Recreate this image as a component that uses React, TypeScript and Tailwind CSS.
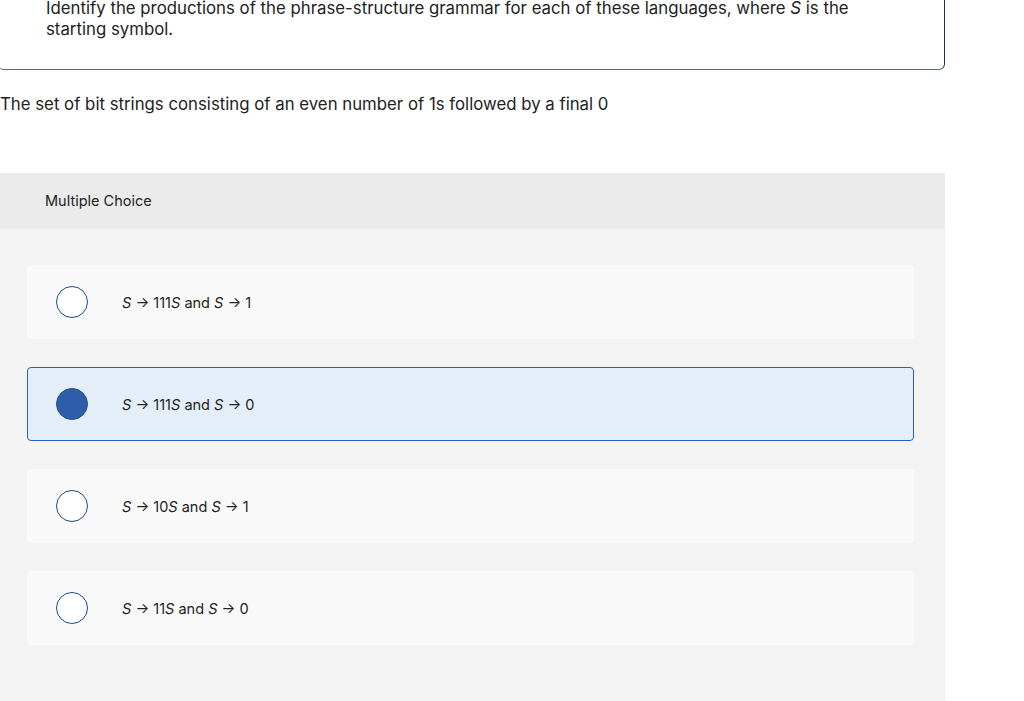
import React from "react";

const options = [
  { id: "a", rhs1: "111", end: "1", selected: false },
  { id: "b", rhs1: "111", end: "0", selected: true },
  { id: "c", rhs1: "10", end: "1", selected: false },
  { id: "d", rhs1: "11", end: "0", selected: false },
];

function Production({ rhs1, end }: { rhs1: string; end: string }) {
  return (
    <span className="text-[14.5px] text-[#222]">
      <i>S</i> → {rhs1}
      <i>S</i> and <i>S</i> → {end}
    </span>
  );
}

export default function App() {
  return (
    <div
      className="w-[1024px] h-[701px] overflow-hidden bg-white text-[#222]"
      style={{ fontFamily: "Inter, 'Noto Sans', sans-serif" }}
    >
      <div className="w-[947px] -ml-[2px] -mt-[2px] border-r border-b border-r-[#1e2f5c] border-b-[#4b6aa1] rounded-br-[6px] rounded-bl-[6px] pl-[48px] pb-[29px]">
        <p className="text-[16.8px] leading-[21px]">
          Identify the productions of the phrase-structure grammar for each of these languages, where <i>S</i> is the
          <br />
          starting symbol.
        </p>
      </div>

      <p className="mt-[23px] text-[16.8px] leading-[22px]">
        The set of bit strings consisting of an even number of 1s followed by a final 0
      </p>

      <div className="mt-[58px] w-[945px] bg-[#f3f3f3]">
        <div className="h-[56px] bg-[#ebebeb] flex items-center pl-[45px] text-[14.5px]">
          Multiple Choice
        </div>
        <div className="pl-[27px] pr-[31px] pt-[36px] pb-[60px] flex flex-col gap-[28px]">
          {options.map((o) => (
            <div
              key={o.id}
              className={`h-[74px] rounded-[4px] flex items-center pl-[28px] ${
                o.selected
                  ? "bg-[#e4eef9] border border-[#2d5fb0]"
                  : "bg-[#f9f9f9] border border-transparent"
              }`}
            >
              <span
                className={`w-[32px] h-[32px] rounded-full shrink-0 ${
                  o.selected
                    ? "bg-[#2e5ea9] border-[1.5px] border-[#24528f]"
                    : "bg-white border-[1.5px] border-[#1f4a86]"
                }`}
              />
              <span className="ml-[34px]">
                <Production rhs1={o.rhs1} end={o.end} />
              </span>
            </div>
          ))}
        </div>
      </div>
    </div>
  );
}
